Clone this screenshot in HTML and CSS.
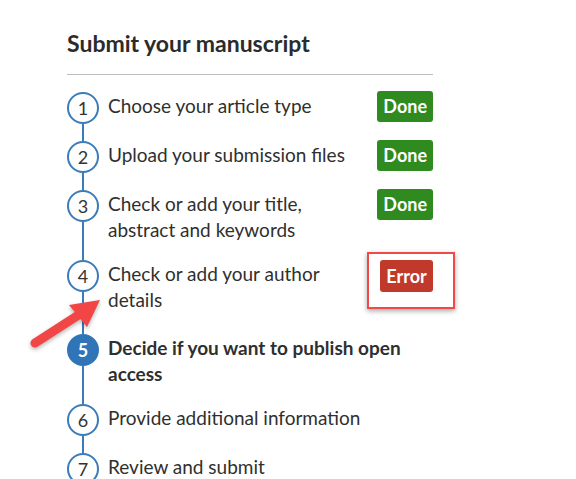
FILE: index.html
```html
<!DOCTYPE html>
<html lang="en">
<head>
<meta charset="utf-8">
<title>Submit your manuscript</title>
<link rel="stylesheet" href="styles.css">
</head>
<body>
<main class="panel">
  <header class="panel__head">
    <h1 class="panel__title">Submit your manuscript</h1>
  </header>
  <ol class="steps">
    <li class="step">
      <div class="step__marker"><span class="step__num">1</span><span class="step__line"></span></div>
      <div class="step__label">Choose your article type</div>
      <div class="step__status"><span class="badge badge--done">Done</span></div>
    </li>
    <li class="step">
      <div class="step__marker"><span class="step__num">2</span><span class="step__line"></span></div>
      <div class="step__label">Upload your submission files</div>
      <div class="step__status"><span class="badge badge--done">Done</span></div>
    </li>
    <li class="step">
      <div class="step__marker"><span class="step__num">3</span><span class="step__line"></span></div>
      <div class="step__label">Check or add your title, abstract and keywords</div>
      <div class="step__status"><span class="badge badge--done">Done</span></div>
    </li>
    <li class="step step--flagged">
      <div class="step__marker"><span class="step__num">4</span><span class="step__line"></span></div>
      <div class="step__label">Check or add your author details</div>
      <div class="step__status step__status--error">
        <span class="badge badge--error">Error</span>
        <span class="highlight-box"></span>
      </div>
    </li>
    <li class="step step--current">
      <div class="step__marker"><span class="step__num">5</span><span class="step__line"></span></div>
      <div class="step__label step__label--wide">Decide if you want to publish open access</div>
    </li>
    <li class="step">
      <div class="step__marker"><span class="step__num">6</span><span class="step__line"></span></div>
      <div class="step__label step__label--wide">Provide additional information</div>
    </li>
    <li class="step">
      <div class="step__marker"><span class="step__num">7</span><span class="step__line"></span></div>
      <div class="step__label step__label--wide">Review and submit</div>
    </li>
  </ol>
</main>
<svg class="callout-arrow" width="85" height="62" viewBox="0 0 85 62" aria-hidden="true">
  <line x1="10" y1="53" x2="55" y2="24" stroke="#f24545" stroke-width="9" stroke-linecap="round"/>
  <polygon points="75,10 44,15 62,37" fill="#f24545"/>
</svg>
</body>
</html>
```
FILE: styles.css
```css
* { box-sizing: border-box; }

html, body {
  margin: 0;
  padding: 0;
  background: #ffffff;
}

body {
  font-family: Lato, "Noto Sans", "Liberation Sans", sans-serif;
  color: #2f2f2f;
  width: 576px;
  height: 479px;
  overflow: hidden;
  position: relative;
}

.panel {
  margin-left: 67px;
  width: 366px;
}

.panel__head {
  padding-top: 30px;
  padding-bottom: 18px;
  border-bottom: 1px solid #bdbdbd;
}

.panel__title {
  margin: 0;
  font-size: 23px;
  line-height: 26px;
  font-weight: 700;
  color: #2b2b2b;
}

.steps {
  list-style: none;
  margin: 17px 0 0 0;
  padding: 0;
}

.step {
  display: grid;
  grid-template-columns: 32px 1fr auto;
  column-gap: 9px;
}

.step__marker {
  display: flex;
  flex-direction: column;
  align-items: center;
}

.step__num {
  width: 32px;
  height: 32px;
  border: 2px solid #3a7cba;
  border-radius: 50%;
  display: flex;
  align-items: center;
  justify-content: center;
  font-size: 18px;
  color: #333333;
  background: #ffffff;
  flex: none;
}

.step__line {
  flex: 1;
  width: 2px;
  min-height: 17px;
  background: #3a7cba;
}

.step__label {
  padding: 1px 0 17px;
  font-size: 19px;
  line-height: 26px;
}

.step__label--wide {
  grid-column: 2 / -1;
}

.step--flagged .step__label {
  padding-bottom: 21px;
}

.step--current .step__num {
  background: #2f75b7;
  border-color: #2f75b7;
  color: #ffffff;
  font-weight: 700;
}

.step--current .step__label {
  font-weight: 700;
}

.step__status {
  align-self: start;
  margin-top: -1px;
}

.step__status--error {
  position: relative;
  margin-top: 0;
}

.badge {
  display: block;
  min-width: 55px;
  height: 31px;
  line-height: 31px;
  padding: 0 6px;
  border-radius: 3px;
  color: #ffffff;
  font-size: 18px;
  font-weight: 700;
  text-align: center;
}

.badge--done {
  background: #2f8a1f;
}

.badge--error {
  background: #c0392b;
  min-width: 53px;
  height: 32px;
  line-height: 32px;
}

.highlight-box {
  position: absolute;
  top: -8px;
  left: -13px;
  right: -22px;
  bottom: -17px;
  border: 2.5px solid #f24848;
  box-shadow: 0 2px 5px rgba(0, 0, 0, 0.35);
}

.callout-arrow {
  position: absolute;
  left: 25px;
  top: 290px;
  filter: drop-shadow(0 2px 2px rgba(0, 0, 0, 0.3));
}
```
